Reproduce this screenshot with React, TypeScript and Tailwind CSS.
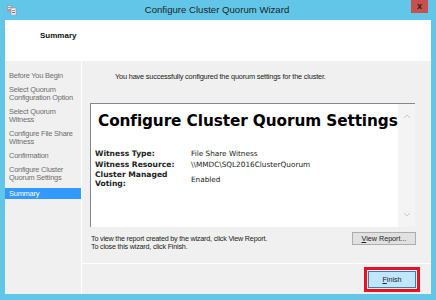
import * as React from "react";

const navItems = [
  ["Before You Begin"],
  ["Select Quorum", "Configuration Option"],
  ["Select Quorum", "Witness"],
  ["Configure File Share", "Witness"],
  ["Confirmation"],
  ["Configure Cluster", "Quorum Settings"],
];

function ServerIcon() {
  return (
    <svg width="11" height="11" viewBox="0 0 11 11">
      <rect x="1" y="1" width="5" height="7" fill="#9aa3ab" />
      <rect x="2" y="2" width="3" height="1" fill="#dfe3e6" />
      <rect x="2" y="4" width="3" height="1" fill="#dfe3e6" />
      <rect x="5" y="4" width="5" height="7" fill="#f4f4f4" stroke="#8a8f94" strokeWidth="0.6" />
      <rect x="6" y="6" width="3" height="1" fill="#8a8f94" />
      <rect x="6" y="8" width="3" height="1" fill="#d04040" />
    </svg>
  );
}

export default function App() {
  return (
    <div
      className="w-[436px] h-[300px] bg-[#62c6e8] flex flex-col overflow-hidden"
      style={{ fontFamily: '"Liberation Sans", Arial, sans-serif' }}
    >
      {/* title bar */}
      <div className="h-[20px] flex items-start relative shrink-0">
        <div className="pl-[6px] pt-[4px]">
          <ServerIcon />
        </div>
        <div className="flex-1 text-center text-[9.6px] leading-[20px] text-[#1e1e1e] pl-[6px]">
          Configure Cluster Quorum Wizard
        </div>
        <div className="w-[17px] h-[13px] bg-[#c7504c] mr-[8px] flex items-center justify-center text-[9px] font-bold leading-none text-[#222]">
          x
        </div>
      </div>

      {/* client area */}
      <div className="mx-[5px] h-[274px] flex flex-col bg-[#f0f0f0]">
        <div className="h-[41px] bg-white shrink-0 pl-[35px] pt-[10px] text-[8px] font-bold text-[#111]">
          Summary
        </div>
        <div className="flex flex-1">
          {/* nav */}
          <div className="w-[77px] border-r border-white pt-[11px] text-[7.4px] leading-[8px] text-[#6d6d6d] tracking-[-0.2px]">
            {navItems.map((lines, i) => (
              <div key={i} className="pl-[4px] mb-[6px]">
                {lines.map((l) => (
                  <div key={l}>{l}</div>
                ))}
              </div>
            ))}
            <div className="bg-[#3399ff] text-white h-[11px] pl-[4px] leading-[11px]">Summary</div>
          </div>

          {/* main */}
          <div className="flex-1 flex flex-col">
            <div className="h-[203px] border-b border-white relative">
              <div className="pl-[33px] pt-[10px] text-[7.4px] text-[#222] tracking-[-0.2px]">
                You have successfully configured the quorum settings for the cluster.
              </div>
              <div className="mt-[21px] ml-[8px] w-[325px] h-[124px] border-t border-l border-[#828790] bg-white flex">
                <div
                  className="flex-1 pl-[4px] pt-[7px]"
                  style={{ fontFamily: '"DejaVu Sans", Verdana, sans-serif' }}
                >
                  <div className="text-[15.3px] font-bold text-black leading-[20px] whitespace-nowrap tracking-[-0.1px] pl-[3px]">
                    Configure Cluster Quorum Settings
                  </div>
                  <div className="mt-[18px] text-[7.3px] leading-[9px] text-[#222]">
                    <div className="flex h-[11px]">
                      <div className="w-[96px] font-bold text-[7.6px]">Witness Type:</div>
                      <div>File Share Witness</div>
                    </div>
                    <div className="flex h-[11px]">
                      <div className="w-[96px] font-bold text-[7.6px]">Witness Resource:</div>
                      <div>\\MMDC\SQL2016ClusterQuorum</div>
                    </div>
                    <div className="flex items-center">
                      <div className="w-[96px] font-bold text-[7.6px] leading-[8.5px]">
                        Cluster Managed
                        <br />
                        Voting:
                      </div>
                      <div>Enabled</div>
                    </div>
                  </div>
                </div>
                <div className="w-[17px] bg-[#f4f4f4] flex flex-col items-center justify-between py-[10px]">
                  <svg width="8" height="5" viewBox="0 0 8 5">
                    <path d="M1 4 L4 1 L7 4" fill="none" stroke="#c8c8c8" strokeWidth="1" />
                  </svg>
                  <svg width="8" height="5" viewBox="0 0 8 5">
                    <path d="M1 1 L4 4 L7 1" fill="none" stroke="#c8c8c8" strokeWidth="1" />
                  </svg>
                </div>
              </div>
              <div className="flex items-start ml-[9px] mt-[5px] w-[325px]">
                <div className="flex-1 pt-[3px] text-[7.2px] leading-[8px] text-[#222] tracking-[-0.2px]">
                  <div>To view the report created by the wizard, click View Report.</div>
                  <div>To close this wizard, click Finish.</div>
                </div>
                <div className="w-[64px] h-[13px] bg-[#e1e1e1] border border-[#adadad] text-[7.2px] leading-[11px] text-center text-[#222]">
                  <span className="underline">V</span>iew Report...
                </div>
              </div>
            </div>
            <div className="flex-1 flex items-center justify-end pr-[11px]">
              <div className="border-[3px] border-[#e81123] p-[1px]">
                <div className="w-[48px] h-[17px] bg-[#bee6fd] border border-[#3c7fb1] text-[7.2px] leading-[15px] text-center text-[#222]">
                  <span className="underline">F</span>inish
                </div>
              </div>
            </div>
          </div>
        </div>
      </div>
    </div>
  );
}
